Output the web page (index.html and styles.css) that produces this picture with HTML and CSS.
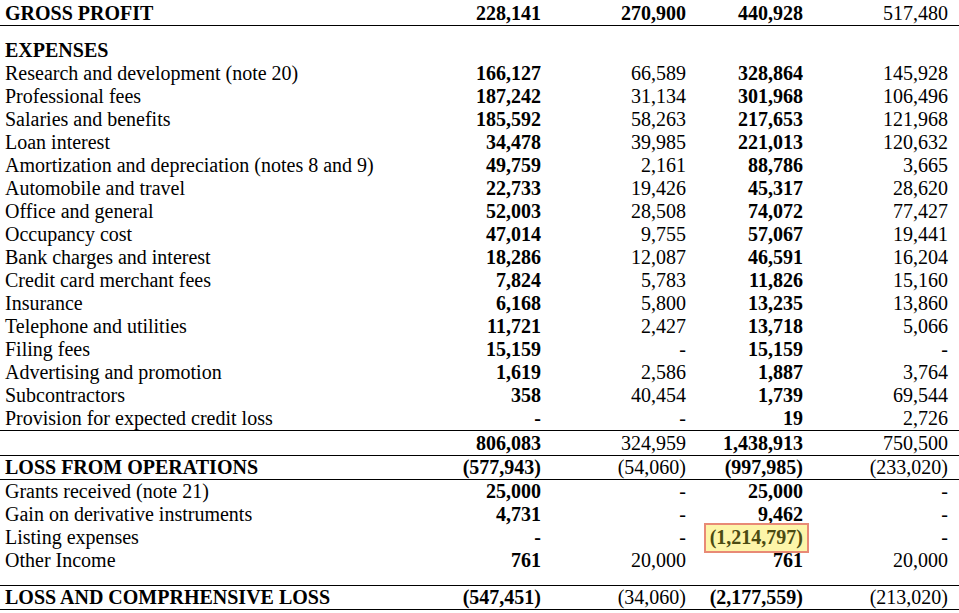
FILE: index.html
```html
<!DOCTYPE html>
<html>
<head>
<meta charset="utf-8">
<link rel="stylesheet" href="styles.css">
</head>
<body>
<table class="stmt">
  <colgroup>
    <col class="c-label"><col class="c-a"><col class="c-b"><col class="c-c"><col class="c-d"><col class="c-pad">
  </colgroup>
  <tbody>
    <tr class="row head rule-b"><td class="label b">GROSS PROFIT</td><td class="b">228,141</td><td class="b">270,900</td><td class="b">440,928</td><td>517,480</td><td></td></tr>
    <tr class="gap-top"><td colspan="6"></td></tr>
    <tr class="row"><td class="label b">EXPENSES</td><td></td><td></td><td></td><td></td><td></td></tr>
    <tr class="row"><td class="label">Research and development (note 20)</td><td class="b">166,127</td><td>66,589</td><td class="b">328,864</td><td>145,928</td><td></td></tr>
    <tr class="row"><td class="label">Professional fees</td><td class="b">187,242</td><td>31,134</td><td class="b">301,968</td><td>106,496</td><td></td></tr>
    <tr class="row"><td class="label">Salaries and benefits</td><td class="b">185,592</td><td>58,263</td><td class="b">217,653</td><td>121,968</td><td></td></tr>
    <tr class="row"><td class="label">Loan interest</td><td class="b">34,478</td><td>39,985</td><td class="b">221,013</td><td>120,632</td><td></td></tr>
    <tr class="row"><td class="label">Amortization and depreciation (notes 8 and 9)</td><td class="b">49,759</td><td>2,161</td><td class="b">88,786</td><td>3,665</td><td></td></tr>
    <tr class="row"><td class="label">Automobile and travel</td><td class="b">22,733</td><td>19,426</td><td class="b">45,317</td><td>28,620</td><td></td></tr>
    <tr class="row"><td class="label">Office and general</td><td class="b">52,003</td><td>28,508</td><td class="b">74,072</td><td>77,427</td><td></td></tr>
    <tr class="row"><td class="label">Occupancy cost</td><td class="b">47,014</td><td>9,755</td><td class="b">57,067</td><td>19,441</td><td></td></tr>
    <tr class="row"><td class="label">Bank charges and interest</td><td class="b">18,286</td><td>12,087</td><td class="b">46,591</td><td>16,204</td><td></td></tr>
    <tr class="row"><td class="label">Credit card merchant fees</td><td class="b">7,824</td><td>5,783</td><td class="b">11,826</td><td>15,160</td><td></td></tr>
    <tr class="row"><td class="label">Insurance</td><td class="b">6,168</td><td>5,800</td><td class="b">13,235</td><td>13,860</td><td></td></tr>
    <tr class="row"><td class="label">Telephone and utilities</td><td class="b">11,721</td><td>2,427</td><td class="b">13,718</td><td>5,066</td><td></td></tr>
    <tr class="row"><td class="label">Filing fees</td><td class="b">15,159</td><td>-</td><td class="b">15,159</td><td>-</td><td></td></tr>
    <tr class="row"><td class="label">Advertising and promotion</td><td class="b">1,619</td><td>2,586</td><td class="b">1,887</td><td>3,764</td><td></td></tr>
    <tr class="row"><td class="label">Subcontractors</td><td class="b">358</td><td>40,454</td><td class="b">1,739</td><td>69,544</td><td></td></tr>
    <tr class="row rule-b"><td class="label">Provision for expected credit loss</td><td class="b">-</td><td>-</td><td class="b">19</td><td>2,726</td><td></td></tr>
    <tr class="row tall rule-b"><td class="label"></td><td class="b">806,083</td><td>324,959</td><td class="b">1,438,913</td><td>750,500</td><td></td></tr>
    <tr class="row mid rule-b"><td class="label b">LOSS FROM OPERATIONS</td><td class="b">(577,943)</td><td>(54,060)</td><td class="b">(997,985)</td><td>(233,020)</td><td></td></tr>
    <tr class="row"><td class="label">Grants received (note 21)</td><td class="b">25,000</td><td>-</td><td class="b">25,000</td><td>-</td><td></td></tr>
    <tr class="row"><td class="label">Gain on derivative instruments</td><td class="b">4,731</td><td>-</td><td class="b">9,462</td><td>-</td><td></td></tr>
    <tr class="row"><td class="label">Listing expenses</td><td class="b">-</td><td>-</td><td class="b"><span class="hl">(1,214,797)</span></td><td>-</td><td></td></tr>
    <tr class="row"><td class="label">Other Income</td><td class="b">761</td><td>20,000</td><td class="b">761</td><td>20,000</td><td></td></tr>
    <tr class="gap-bot rule-b"><td colspan="6"></td></tr>
    <tr class="row rule-b"><td class="label b">LOSS AND COMPRHENSIVE LOSS</td><td class="b">(547,451)</td><td>(34,060)</td><td class="b">(2,177,559)</td><td>(213,020)</td><td></td></tr>
  </tbody>
</table>
</body>
</html>
```

FILE: styles.css
```css
html, body {
  margin: 0;
  padding: 0;
  background: #ffffff;
}

body {
  font-family: "Liberation Serif", "Times New Roman", serif;
  font-size: 20px;
  color: #000;
}

.stmt {
  width: 959px;
  border-collapse: collapse;
  table-layout: fixed;
}

.c-label { width: 460px; }
.c-a { width: 81px; }
.c-b { width: 145px; }
.c-c { width: 117px; }
.c-d { width: 145px; }
.c-pad { width: 11px; }

.stmt td {
  padding: 0;
  text-align: right;
  white-space: nowrap;
  vertical-align: middle;
}

.stmt td.label {
  text-align: left;
  padding-left: 5px;
}

.b { font-weight: bold; }

.row td {
  height: 23px;
  line-height: 23px;
}

.row.head td {
  height: 23px;
  line-height: 23px;
  padding-top: 2px;
}

.row.tall td {
  height: 24px;
  line-height: 24px;
}

.row.mid td {
  height: 23px;
  line-height: 23px;
}

.gap-top td { height: 13px; }
.gap-bot td { height: 13px; }

.rule-b td {
  border-bottom: 1px solid #000;
}

.hl {
  display: inline-block;
  color: #4b4a12;
  background: #fdf5a9;
  border: 2px solid #e88a76;
  line-height: 23px;
  padding: 1px 4px 2px 4px;
  margin: -3px -6px -4px 0;
  vertical-align: top;
}
```
